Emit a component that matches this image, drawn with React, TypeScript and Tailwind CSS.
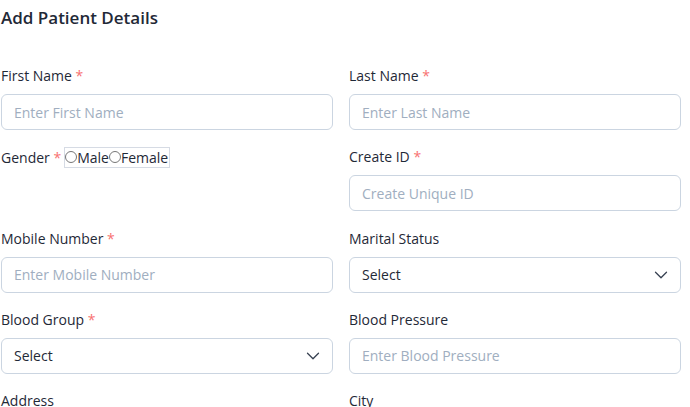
import { ChevronDown } from "lucide-react";

const font = { fontFamily: '"Open Sans", "Noto Sans", sans-serif' };

const Req = () => <span className="text-[#f87171]"> *</span>;

const Label = ({ text, req }: { text: string; req?: boolean }) => (
  <label className="block text-[14px] leading-5 text-[#1f2937] mb-2">
    {text}
    {req && <Req />}
  </label>
);

const TextField = ({ label, req, placeholder }: { label: string; req?: boolean; placeholder: string }) => (
  <div>
    <Label text={label} req={req} />
    <input
      placeholder={placeholder}
      className="w-full h-9 rounded-md border border-[#cbd5e1] px-3 text-[14px] text-[#1f2937] placeholder:text-[#a0aec0] outline-none"
    />
  </div>
);

const SelectField = ({ label, req }: { label: string; req?: boolean }) => (
  <div>
    <Label text={label} req={req} />
    <div className="w-full h-9 rounded-md border border-[#cbd5e1] pl-3 pr-2 flex items-center justify-between text-[14px] text-[#1f2937]">
      <span>Select</span>
      <ChevronDown size={22} strokeWidth={1.4} className="text-[#374151]" />
    </div>
  </div>
);

export default function App() {
  return (
    <div className="w-[690px] h-[407px] overflow-hidden bg-white pl-px" style={font}>
      <h1 className="text-[17px] leading-6 font-semibold text-[#1f2937] pt-[6px] mb-[36px]">Add Patient Details</h1>
      <div className="w-[680px] grid grid-cols-2 gap-x-4 gap-y-[17.33px]">
        <TextField label="First Name" req placeholder="Enter First Name" />
        <TextField label="Last Name" req placeholder="Enter Last Name" />
        <div className="flex items-center h-5 text-[14px] text-[#1f2937]">
          <span>
            Gender
            <Req />
          </span>
          <div className="ml-[3px] flex items-center border border-[#d6dbe4] h-[21px] pr-[1px]">
            <input type="radio" name="g" className="w-3 h-3 m-0" />
            <span>Male</span>
            <input type="radio" name="g" className="w-3 h-3 m-0" />
            <span>Female</span>
          </div>
        </div>
        <TextField label="Create ID" req placeholder="Create Unique ID" />
        <TextField label="Mobile Number" req placeholder="Enter Mobile Number" />
        <SelectField label="Marital Status" />
        <SelectField label="Blood Group" req />
        <TextField label="Blood Pressure" placeholder="Enter Blood Pressure" />
        <TextField label="Address" placeholder="Enter Address" />
        <TextField label="City" placeholder="Enter City" />
      </div>
    </div>
  );
}
